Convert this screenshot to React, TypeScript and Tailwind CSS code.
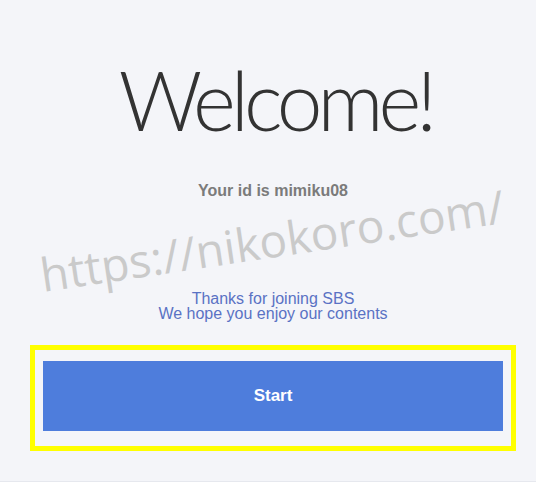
import React from 'react';

export default function App() {
  return (
    <div className="relative w-full h-[482px] bg-[#f4f5f9] border-b border-[#e6e8ee] overflow-hidden">
      <div className="flex flex-col items-center w-[486px] ml-[30px]">
        <h1 className="mt-[58px] pl-[5px] text-[82px] leading-none font-light text-[#333333] tracking-[-5px] font-['Lato','Open_Sans',sans-serif]">
          Welcome!
        </h1>
        <p className="mt-[42px] text-[16px] leading-[18px] font-bold text-[#7b7b7b] font-['Liberation_Sans',Arial,sans-serif]">
          Your id is mimiku08
        </p>
        <div className="mt-[91px] flex flex-col items-center text-[16px] leading-[15px] text-[#5a72c4] font-['Liberation_Sans',Arial,sans-serif]">
          <p>Thanks for joining SBS</p>
          <p>We hope you enjoy our contents</p>
        </div>
        {/* yellow highlight around the button */}
        <div className="mt-[24px] w-[486px] h-[106px] border-[5px] border-[#ffff00] pt-[11px] px-[8px]">
          <button className="w-full h-[70px] bg-[#4e7ddc] text-white text-[17px] font-bold font-['Liberation_Sans',Arial,sans-serif]">
            Start
          </button>
        </div>
      </div>

      {/* watermark */}
      <div className="pointer-events-none absolute left-[272px] top-[240px] whitespace-nowrap text-[46px] text-[#cacaca] -translate-x-1/2 -translate-y-1/2 -rotate-[8.5deg] font-['Open_Sans','Noto_Sans',sans-serif]">
        https://nikokoro.com/
      </div>
    </div>
  );
}
